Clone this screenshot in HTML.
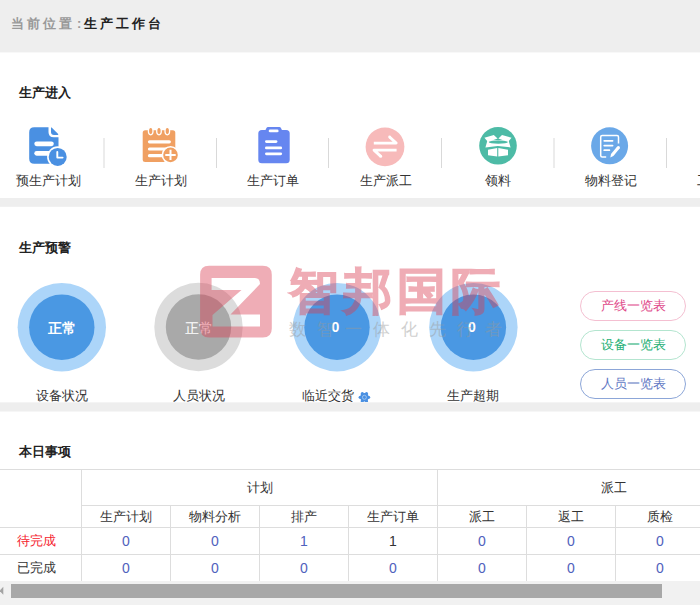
<!DOCTYPE html>
<html><head><meta charset="utf-8">
<style>
*{margin:0;padding:0;box-sizing:border-box}
html,body{width:700px;height:605px;overflow:hidden;background:#eeeeee;font-family:"Liberation Sans",sans-serif;color:#333;position:relative}
.abs{position:absolute}
.crumb{left:11px;top:15px;font-size:13px;font-weight:bold;letter-spacing:3px;line-height:18px;white-space:nowrap}
.crumb .g{color:#999}
.crumb .d{color:#222}
.panel{position:absolute;left:0;width:700px;background:#fff;overflow:hidden}
.title{position:absolute;left:19px;font-size:13px;font-weight:bold;color:#222;line-height:18px}
.lbl{position:absolute;width:112px;text-align:center;font-size:13px;line-height:18px;top:120px;color:#333;white-space:nowrap}
.dv{position:absolute;top:86px;width:2px;height:30px;background:#e8e8e8}
.clbl{position:absolute;width:140px;text-align:center;font-size:13px;line-height:18px;color:#333;white-space:nowrap;top:181px}
.ctx{position:absolute;width:80px;text-align:center;font-size:14px;line-height:18px;color:#fff;font-weight:bold;top:112.5px}
.btn{position:absolute;left:580px;width:106px;height:30px;border-radius:15px;border:1px solid;font-size:13px;text-align:center;line-height:28px;background:#fff}
table{position:absolute;border-collapse:collapse;table-layout:fixed}
td{border:1px solid #dddddd;text-align:center;font-size:13px;color:#333;white-space:nowrap;padding:0;overflow:hidden}
.n{color:#5062bd}
td.n,td.k{font-size:14px}
svg{position:absolute;left:0;top:0}
</style></head><body>
<div class="abs crumb"><span class="g">当前位置<span style="padding-left:2px">:</span></span><span class="d">生产工作台</span></div>

<div class="panel" style="top:52px;height:146px">
  <div class="title" style="top:32px">生产进入</div>
  <div class="lbl" style="left:-8px">预生产计划</div>
  <div class="lbl" style="left:104.5px">生产计划</div>
  <div class="lbl" style="left:217px">生产订单</div>
  <div class="lbl" style="left:329.5px">生产派工</div>
  <div class="lbl" style="left:442px">领料</div>
  <div class="lbl" style="left:554.5px">物料登记</div>
  <div class="lbl" style="left:667px">工序派工</div>
  <svg width="700" height="146" viewBox="0 52 700 146"><g fill="#d9d9d9"><rect x="103.5" y="138" width="1" height="30"/><rect x="216" y="138" width="1" height="30"/><rect x="328" y="138" width="1" height="30"/><rect x="441" y="138" width="1" height="30"/><rect x="553.5" y="138" width="1" height="30"/><rect x="666" y="138" width="1" height="30"/></g></svg>
  <svg width="700" height="146" viewBox="0 52 700 146">
    <!-- icon1 -->
    <g fill="#4a90e2">
      <path d="M34.2,127.2 H48.5 V132 Q48.5,137.3 53.8,137.3 H58.5 V158.7 Q58.5,163.7 53.5,163.7 H34.2 Q29.2,163.7 29.2,158.7 V132.2 Q29.2,127.2 34.2,127.2 Z"/>
      <path d="M51,127.6 Q51,127.2 51.6,127.6 L58.2,134 Q58.6,134.9 57.6,134.9 H54 Q51,134.9 51,131.9 Z"/>
    </g>
    <g fill="#fff">
      <rect x="34.3" y="141.4" width="19.5" height="4.8" rx="2.4"/>
      <rect x="34.3" y="151" width="17" height="4.7" rx="2.35"/>
      <circle cx="57.7" cy="156.9" r="10.6"/>
    </g>
    <circle cx="57.7" cy="156.9" r="9" fill="#4a90e2"/>
    <path d="M57.3,152 V157.6 H62.6" fill="none" stroke="#fff" stroke-width="1.9" stroke-linecap="round" stroke-linejoin="round"/>
    <!-- icon2 -->
    <rect x="142.7" y="130.3" width="32.6" height="31.7" rx="2.5" fill="#f0a062"/>
    <g fill="#f0a062" stroke="#fff" stroke-width="1.3">
      <ellipse cx="150.7" cy="131.1" rx="2.3" ry="3.7"/>
      <ellipse cx="159" cy="131.1" rx="2.3" ry="3.7"/>
      <ellipse cx="167.3" cy="131.1" rx="2.3" ry="3.7"/>
    </g>
    <g fill="#fff">
      <rect x="147.9" y="140.2" width="23" height="3.2" rx="1.6"/>
      <rect x="147.9" y="147.4" width="20" height="3.2" rx="1.6"/>
      <rect x="147.9" y="154.1" width="16" height="3.2" rx="1.6"/>
      <circle cx="170.5" cy="154.9" r="8.9"/>
    </g>
    <circle cx="170.5" cy="154.9" r="7.3" fill="#f0a062"/>
    <path d="M165.3,154.9 H175.7 M170.5,149.7 V160.1" stroke="#fff" stroke-width="2" fill="none"/>
    <!-- icon3 -->
    <g fill="#6686f0">
      <rect x="258.3" y="129.9" width="31.4" height="33.4" rx="3.5"/>
      <path d="M268.2,127 H279.2 Q280.6,127 281.2,128.4 L282.6,131.5 H264.8 L266.2,128.4 Q266.8,127 268.2,127 Z"/>
    </g>
    <g fill="#fff">
      <rect x="268.7" y="129.5" width="9.9" height="2.8" rx="1.4"/>
      <rect x="265" y="140.2" width="12.4" height="2.8" rx="1.4"/>
      <rect x="265" y="146.6" width="17.1" height="2.7" rx="1.35"/>
      <rect x="265" y="152.4" width="17.1" height="2.9" rx="1.45"/>
    </g>
    <!-- icon4 -->
    <circle cx="385" cy="146.8" r="19.4" fill="#f7baba"/>
    <path d="M373.8,143.1 H396.2 L389.6,137" fill="none" stroke="#fff" stroke-width="2.8" stroke-linecap="butt" stroke-linejoin="round"/><circle cx="389.6" cy="137" r="1.4" fill="#fff"/>
    <path d="M396.6,150.1 H374 L380.8,156.4" fill="none" stroke="#fff" stroke-width="2.8" stroke-linecap="butt" stroke-linejoin="round"/><circle cx="380.8" cy="156.4" r="1.4" fill="#fff"/>
    <!-- icon5 -->
    <circle cx="498" cy="145.8" r="18.8" fill="#4dbba6"/>
    <g fill="#fff">
      <path d="M487.5,140.2 L508.5,140.2 L510.6,147.4 L497.8,145.9 L485.4,147.4 Z"/>
      <path d="M484.4,137.8 L493.8,135.1 L497.6,138.6 L488,141.9 Z"/>
      <path d="M498.4,138.6 L502,135.1 L511.5,137.8 L508,141.9 Z"/>
      <path d="M488,149.7 L497.2,147.9 V156.5 L488,155.2 Z"/>
      <path d="M498.3,147.9 L508,149.7 V155.2 L498.3,156.5 Z"/>
    </g>
    <ellipse cx="498.3" cy="142.1" rx="9.6" ry="1.7" fill="#4dbba6"/>
    <!-- icon6 -->
    <circle cx="609.6" cy="145.8" r="18.5" fill="#6aa8e8"/>
    <path d="M618.5,143.5 V137 Q618.5,135.5 617,135.5 H602.2 Q600.7,135.5 600.7,137 V155.4 Q600.7,156.9 602.2,156.9 H606.2" fill="none" stroke="#fff" stroke-width="1.5"/>
    <path d="M604.2,140.8 H612.6 M604.2,145.6 H612.6 M604.2,150.2 H609.4" fill="none" stroke="#fff" stroke-width="1.7" stroke-linecap="round"/>
    <path d="M619.6,148.6 L613.4,156 L610.3,157.4 L611,154 L617.2,146.6 Z" fill="#fff"/><circle cx="618.4" cy="147.6" r="1.55" fill="#fff"/>
  </svg>
</div>

<div class="panel" style="top:206px;height:196px">
  <div class="title" style="top:33px">生产预警</div>
  <svg width="700" height="196" viewBox="0 206 700 196">
    <circle cx="61.8" cy="327.2" r="44.2" fill="#acd5f9"/>
    <circle cx="61.8" cy="327.2" r="32.7" fill="#4a98e3"/>
    <circle cx="198.5" cy="327" r="44.2" fill="#dcdcdc"/>
    <circle cx="198.5" cy="327" r="32.7" fill="#a9a9a9"/>
    <circle cx="337" cy="327.2" r="44.2" fill="#acd5f9"/>
    <circle cx="337" cy="327.2" r="32.7" fill="#4a98e3"/>
    <circle cx="473.4" cy="327.2" r="44.2" fill="#acd5f9"/>
    <circle cx="473.4" cy="327.2" r="32.7" fill="#4a98e3"/>
  </svg>
  <div class="ctx" style="left:21.8px">正常</div>
  <div class="ctx" style="left:158.5px;font-weight:normal">正常</div>
  <div class="ctx" style="left:295.5px;top:112px">0</div>
  <div class="ctx" style="left:432px;top:112px">0</div>
  <div class="clbl" style="left:-8.2px">设备状况</div>
  <div class="clbl" style="left:128.5px">人员状况</div>
  <div class="clbl" style="left:258.3px">临近交货</div>
  <svg width="700" height="196" viewBox="0 206 700 196"><g fill="#4a90e2"><circle cx="364.4" cy="397.3" r="4.3"/><circle cx="368.6" cy="397.3" r="1.6"/><circle cx="360.2" cy="397.3" r="1.6"/><circle cx="366.5" cy="393.7" r="1.6"/><circle cx="362.3" cy="393.7" r="1.6"/><circle cx="366.5" cy="400.9" r="1.6"/><circle cx="362.3" cy="400.9" r="1.6"/></g><circle cx="364.4" cy="397.3" r="2" fill="none" stroke="#9cc4f0" stroke-width="1"/></svg>
  <div class="clbl" style="left:403.4px">生产超期</div>
  <div class="btn" style="top:85px;border-color:#f4bfd1;color:#e04a8a">产线一览表</div>
  <div class="btn" style="top:124px;border-color:#b3e5cf;color:#26b075">设备一览表</div>
  <div class="btn" style="top:163px;border-color:#8ca6d8;color:#5f78c4">人员一览表</div>
</div>

<div class="panel" style="top:410px;height:195px">
  <div class="title" style="top:33px">本日事项</div>
  <table style="left:-10px;top:59px;width:800px">
    <colgroup><col style="width:91px"><col style="width:89px"><col style="width:89px"><col style="width:89px"><col style="width:89px"><col style="width:89px"><col style="width:89px"><col style="width:89px"><col style="width:86px"></colgroup>
    <tr style="height:36px"><td rowspan="2"></td><td colspan="4">计划</td><td colspan="4">派工</td></tr>
    <tr style="height:22px"><td>生产计划</td><td>物料分析</td><td>排产</td><td>生产订单</td><td>派工</td><td>返工</td><td>质检</td><td></td></tr>
    <tr style="height:27px"><td style="color:#f5222d">待完成</td><td class="n">0</td><td class="n">0</td><td class="n">1</td><td class="k">1</td><td class="n">0</td><td class="n">0</td><td class="n">0</td><td class="n">0</td></tr>
    <tr style="height:27px"><td>已完成</td><td class="n">0</td><td class="n">0</td><td class="n">0</td><td class="n">0</td><td class="n">0</td><td class="n">0</td><td class="n">0</td><td class="n">0</td></tr>
  </table>
  <div class="abs" style="left:0;top:171px;width:700px;height:24px;background:#f1f1f1"></div>
  <div class="abs" style="left:11px;top:174px;width:651px;height:14px;background:#a8a8a8"></div>
  <svg width="10" height="20" viewBox="0 581 10 20" style="top:171px"><path d="M3.3,586.8 V594.8 L-0.5,590.8 Z" fill="#a3a3a3"/></svg>
</div>

<svg width="700" height="605" viewBox="0 0 700 605" style="pointer-events:none">
  <path fill-rule="evenodd" fill="rgba(218,60,80,0.42)" d="M209.1,265.7 H262.8 Q271.8,265.7 271.8,274.7 V328.6 Q271.8,337.6 262.8,337.6 H209.1 Q200.1,337.6 200.1,328.6 V274.7 Q200.1,265.7 209.1,265.7 Z M211.6,278 H255 Q260,278 260,284 L230.5,314.5 H260 V326.4 H212.5 V315 L241.5,290 H211.6 Z"/>
</svg>
<div class="abs" style="left:0;top:52px;width:700px;height:1px;background:#f8f8f8"></div>
<div class="abs" style="left:0;top:206px;width:700px;height:1px;background:#f1f1f1"></div>
<div class="abs" style="left:0;top:402px;width:700px;height:1px;background:#f4f4f4"></div>
<div class="abs" style="left:0;top:410px;width:700px;height:1px;background:#eeeeee"></div>
<div class="abs" style="left:0;top:411px;width:700px;height:1px;background:#f6f6f6"></div>
<div class="abs" style="left:0;top:0;width:700px;height:605px;opacity:0.42">
<div class="abs" style="left:289px;top:260px;font-size:49px;line-height:62px;font-weight:bold;letter-spacing:5px;color:#da3c50;-webkit-text-stroke:1.2px #da3c50;white-space:nowrap">智邦国际</div>
</div>
<div class="abs" style="left:0;top:0;width:700px;height:605px;opacity:0.45">
<div class="abs" style="left:289px;top:318.5px;font-size:17px;line-height:22px;letter-spacing:11px;color:#999999;white-space:nowrap">数智一体化先行者</div>
</div>
</body></html>
